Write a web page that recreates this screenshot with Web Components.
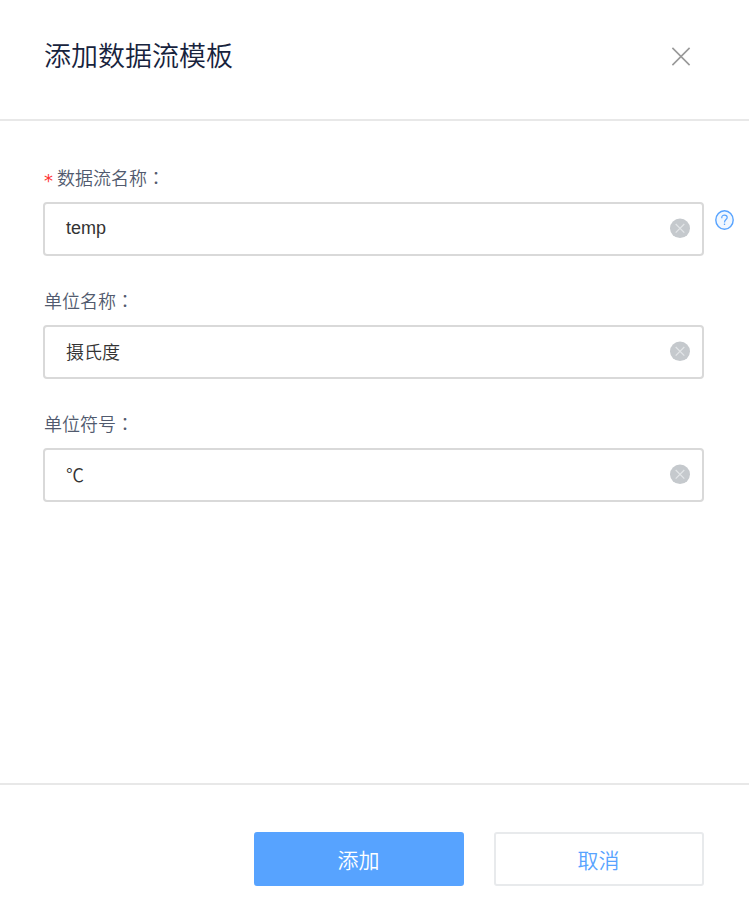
<!DOCTYPE html>
<html lang="zh-CN">
<head>
<meta charset="utf-8">
<title>添加数据流模板</title>
<style>
  html, body {
    margin: 0;
    height: 100%;
    background: #fff;
    font-family: "Liberation Sans", "Noto Sans CJK SC DemiLight", "Noto Sans CJK SC", sans-serif;
  }
  /* centred full-width colon */
  .colon {
    font-family: "Noto Sans CJK TC", sans-serif;
    line-height: 1;
  }
</style>
</head>
<body>
<stream-dialog>
  <span slot="title">添加数据流模板</span>
  <stream-field required help latin>
    <span slot="label">数据流名称<span class="colon" lang="zh-TW">：</span></span>temp
  </stream-field>
  <stream-field>
    <span slot="label">单位名称<span class="colon" lang="zh-TW">：</span></span>摄氏度
  </stream-field>
  <stream-field>
    <span slot="label">单位符号<span class="colon" lang="zh-TW">：</span></span>℃
  </stream-field>
  <stream-button slot="footer" primary>添加</stream-button>
  <stream-button slot="footer">取消</stream-button>
</stream-dialog>

<script>
//#region TEMPLATES
const dialog_template = document.createElement("template");
dialog_template.innerHTML = /* html */ `
<style>
  * {
    box-sizing: border-box;
  }
  :host {
    display: flex;
    flex-direction: column;
    height: 907px;
    overflow: hidden;
  }
  header {
    display: flex;
    justify-content: space-between;
    align-items: flex-start;
    height: 121px;
    padding: 36px 58px 0 44px;
    border-bottom: 2px solid #e8e8e8;
  }
  h1 {
    margin: 0;
    padding-top: 1px;
    color: #17233d;
    font-size: 27px;
    font-weight: 350;
    line-height: 40px;
  }
  header svg {
    margin-top: 10px;
  }
  main {
    flex: 1;
    display: flex;
    flex-direction: column;
    gap: 28px;
    padding: 40px 14px 0 43px;
  }
  footer {
    display: flex;
    justify-content: flex-end;
    gap: 30px;
    height: 124px;
    padding: 47px 45px 0 0;
    border-top: 2px solid #e8e8e8;
  }
</style>

<header>
  <h1><slot name="title"></slot></h1>
  <svg width="20" height="20" viewBox="0 0 20 20" fill="none" stroke="#999" stroke-width="1.6">
    <path d="M1.4 1.9L18.6 19.1M18.6 1.9L1.4 19.1"/>
  </svg>
</header>
<main><slot></slot></main>
<footer><slot name="footer"></slot></footer>
`;

const field_template = document.createElement("template");
field_template.innerHTML = /* html */ `
<style>
  * {
    box-sizing: border-box;
  }
  :host {
    display: block;
  }
  .label {
    display: flex;
    height: 41px;
    padding-top: 1px;
    padding-left: 1px;
    color: #515a6e;
    font-size: 18px;
    font-weight: 350;
    line-height: 34px;
  }
  .star {
    display: none;
    width: 13px;
    padding-top: 2px;
    color: #f33;
    font-family: "DejaVu Sans", sans-serif;
    font-size: 18px;
    font-weight: 400;
  }
  :host([required]) .star {
    display: block;
  }
  .row {
    display: flex;
    gap: 11px;
  }
  .input {
    display: flex;
    justify-content: space-between;
    align-items: center;
    width: 661px;
    height: 54px;
    padding: 0 12px 0 21px;
    border: 2px solid #d9d9d9;
    border-radius: 4px;
    color: #333;
    font-size: 18px;
    font-weight: 300;
    line-height: 26px;
  }
  .value {
    padding-top: 2px;
  }
  :host([latin]) .value {
    padding: 0 0 2px;
  }
  .input svg {
    margin-bottom: 2px;
  }
  .help {
    display: none;
    margin-top: 7px;
  }
  :host([help]) .help {
    display: block;
  }
</style>

<div class="label"><span class="star">*</span><slot name="label"></slot></div>
<div class="row">
  <div class="input">
    <span class="value"><slot></slot></span>
    <svg width="20" height="20" viewBox="0 0 20 20">
      <ellipse cx="10" cy="10.3" rx="10" ry="9.7" fill="#c5c9cd"/>
      <path d="M5.7 6L14.3 14.6M14.3 6L5.7 14.6" stroke="#e3e6e8" stroke-width="1.2"/>
    </svg>
  </div>
  <svg class="help" width="20" height="22" viewBox="0 0 20 22" fill="none" stroke="#57a3ff">
    <ellipse cx="9.5" cy="11" rx="8.7" ry="9.3" fill="#f0f7ff" stroke-width="1.4"/>
    <path d="M6.8 9.2V8.2C6.8 5.4 12.2 5.4 12.2 8.4C12.2 10.6 9.5 10.6 9.5 13.4" stroke-width="1.2"/>
    <path d="M9.5 14.6V16" stroke-width="1.3"/>
  </svg>
</div>
`;

const button_template = document.createElement("template");
button_template.innerHTML = /* html */ `
<style>
  :host {
    display: block;
  }
  button {
    box-sizing: border-box;
    display: block;
    width: 210px;
    height: 54px;
    padding: 4px 1px 0 0;
    border: 2px solid #e8eaec;
    border-radius: 3px;
    background: #fff;
    color: #57a3ff;
    font-family: inherit;
    font-size: 21px;
    font-weight: 400;
    line-height: 30px;
  }
  :host([primary]) button {
    border-color: #57a3ff;
    background: #57a3ff;
    color: #fff;
  }
</style>

<button type="button"><slot></slot></button>
`;
//#endregion TEMPLATES

//#region CLASSES
window.customElements.define(
	"stream-dialog",
	class extends HTMLElement {
		constructor() {
			super();
			this.attachShadow({mode: "open"}).appendChild(
				dialog_template.content.cloneNode(true)
			);
		}
	}
);

window.customElements.define(
	"stream-field",
	class extends HTMLElement {
		constructor() {
			super();
			this.attachShadow({mode: "open"}).appendChild(
				field_template.content.cloneNode(true)
			);
		}
	}
);

window.customElements.define(
	"stream-button",
	class extends HTMLElement {
		constructor() {
			super();
			this.attachShadow({mode: "open"}).appendChild(
				button_template.content.cloneNode(true)
			);
		}
	}
);
//#endregion CLASSES
</script>
</body>
</html>
